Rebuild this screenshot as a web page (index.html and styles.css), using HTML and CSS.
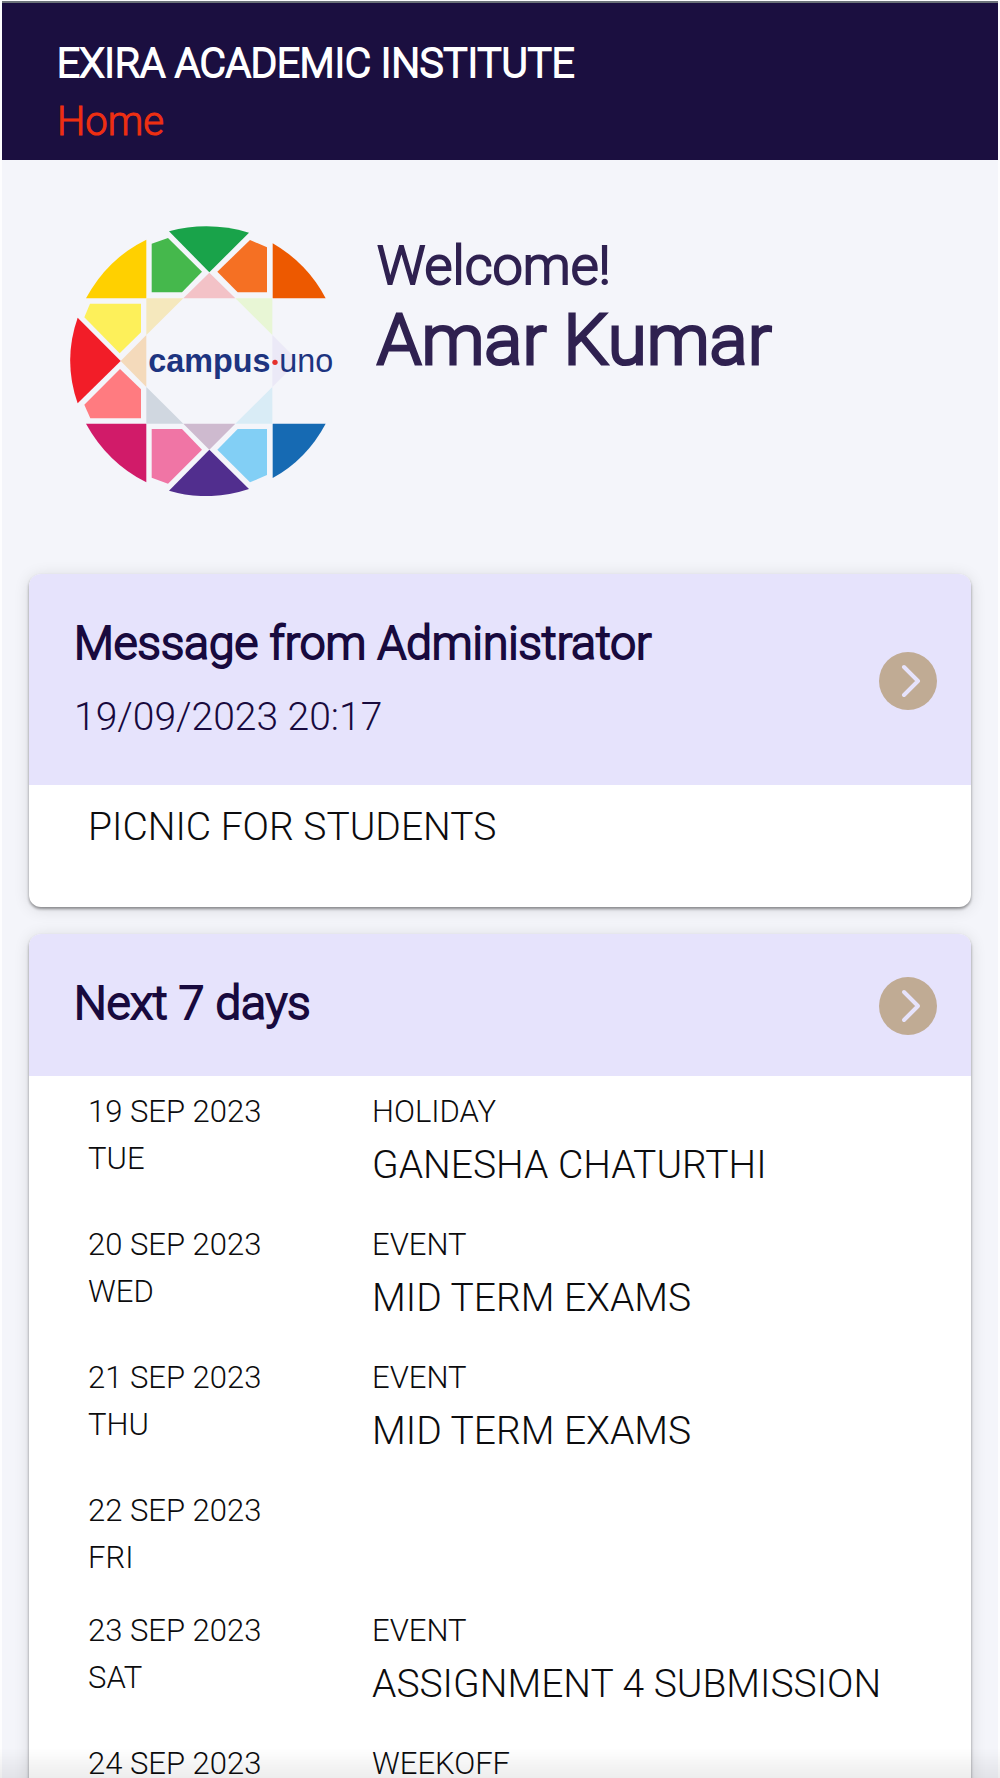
FILE: index.html
```
<!DOCTYPE html>
<html lang="en">
<head>
    <meta charset="UTF-8">
    <meta name="viewport" content="width=device-width, initial-scale=1.0">
    <title>Exira Academic Institute</title>
    <link rel="stylesheet" href="styles.css">
</head>
<body>
    <header class="topbar">
        <h1 class="institute">EXIRA ACADEMIC INSTITUTE</h1>
        <p class="page-name">Home</p>
    </header>
    <main class="content">
        <section class="welcome">
            <svg class="logo" viewBox="60 48 792 810" role="img" aria-label="campus uno">
                <!-- outer ring -->
                <path fill="#19a34a" d="M357 64Q476 32 597 68L478 187Z"/>
                <path fill="#ed5900" d="M668 100Q772 160 827 265H668Z"/>
                <path fill="#ffd000" d="M289 89V265H108Q172 146 289 89Z"/>
                <path fill="#f21d28" d="M83 323L212 453L83 580Q38 451 83 323Z"/>
                <path fill="#d11b69" d="M108 641H289V817Q172 758 108 641Z"/>
                <path fill="#512e8e" d="M478 719L597 837Q476 877 357 842Z"/>
                <path fill="#166ab3" d="M668 641H827Q770 748 668 804Z"/>
                <!-- inner ring -->
                <path fill="#45b84c" d="M305 101L354 84L456 185L396 247H305Z"/>
                <path fill="#f57023" d="M600 90L651 112V247H563L502 185Z"/>
                <path fill="#fdf05a" d="M120 281H273V367L209 430L103 322Z"/>
                <path fill="#ff7b80" d="M210 477L273 538V625H121L103 584Z"/>
                <path fill="#f075a5" d="M305 657H396L456 719L354 821L305 803Z"/>
                <path fill="#82cff5" d="M563 657H651V795L600 817L502 719Z"/>
                <!-- pale star -->
                <path fill="#f3c2c7" d="M478 188L556 265H400Z"/>
                <path fill="#f5e8bd" d="M289 265H400L289 375Z"/>
                <path fill="#e8f6d5" d="M556 265H667V375Z"/>
                <path fill="#f4dabb" d="M289 375V531L212 453Z"/>
                <path fill="#ebe9f7" d="M667 375L744 453L667 531Z"/>
                <path fill="#d0d7e0" d="M289 531L400 641H289Z"/>
                <path fill="#d9ecf6" d="M667 531V641H556Z"/>
                <path fill="#cebacf" d="M400 641H556L478 719Z"/>
                <text class="logo-bold" x="295" y="487">campus</text>
                <circle cx="675" cy="457" r="8" fill="#e5302c"/>
                <text class="logo-thin" x="688" y="487">uno</text>
            </svg>
            <div class="greeting">
                <p class="hello">Welcome!</p>
                <h2 class="user-name">Amar Kumar</h2>
            </div>
        </section>

        <section class="card">
            <div class="card-header">
                <div>
                    <h3 class="card-title">Message from Administrator</h3>
                    <p class="card-date">19/09/2023 20:17</p>
                </div>
                <button class="open-button" type="button" aria-label="Open messages">
                    <svg viewBox="0 0 58 58">
                        <circle cx="29" cy="29" r="29"/>
                        <path d="M25 15L39 29L25 43"/>
                    </svg>
                </button>
            </div>
            <div class="card-body message">
                <p class="detail">PICNIC FOR STUDENTS</p>
            </div>
        </section>

        <section class="card">
            <div class="card-header">
                <h3 class="card-title">Next 7 days</h3>
                <button class="open-button" type="button" aria-label="Open calendar">
                    <svg viewBox="0 0 58 58">
                        <circle cx="29" cy="29" r="29"/>
                        <path d="M25 15L39 29L25 43"/>
                    </svg>
                </button>
            </div>
            <ul class="card-body days">
                <li class="day">
                    <div class="label"><p>19 SEP 2023</p><p>TUE</p></div>
                    <div><p class="label">HOLIDAY</p><p class="detail">GANESHA CHATURTHI</p></div>
                </li>
                <li class="day">
                    <div class="label"><p>20 SEP 2023</p><p>WED</p></div>
                    <div><p class="label">EVENT</p><p class="detail">MID TERM EXAMS</p></div>
                </li>
                <li class="day">
                    <div class="label"><p>21 SEP 2023</p><p>THU</p></div>
                    <div><p class="label">EVENT</p><p class="detail">MID TERM EXAMS</p></div>
                </li>
                <li class="day">
                    <div class="label"><p>22 SEP 2023</p><p>FRI</p></div>
                </li>
                <li class="day">
                    <div class="label"><p>23 SEP 2023</p><p>SAT</p></div>
                    <div><p class="label">EVENT</p><p class="detail">ASSIGNMENT 4 SUBMISSION</p></div>
                </li>
                <li class="day">
                    <div class="label"><p>24 SEP 2023</p></div>
                    <div><p class="label">WEEKOFF</p></div>
                </li>
            </ul>
        </section>
    </main>
    <div class="bottom-fade"></div>
</body>
</html>
```
FILE: styles.css
```
* {
    box-sizing: border-box;
    margin: 0;
    padding: 0;
}
body {
    display: flex;
    flex-direction: column;
    height: 100vh;
    padding: 1px 2px 0;
    background-color: #fdfdfe;
    color: #0c0c0e;
    font-family: Roboto, sans-serif;
    font-weight: 300;
    overflow: hidden;
}
.topbar {
    flex: none;
    padding: 32px 55px 9px;
    border-top: 2px solid #6d747a;
    background-color: #1b0f40;
    font-size: 40px;
    line-height: 58px;
}
/* light face thickened with a stroke */
.institute, .page-name, .hello, .user-name, .card-title {
    font-weight: 300;
    -webkit-text-stroke: 2px currentColor;
}
.institute {
    color: #fff;
    font-size: 40px;
}
.page-name {
    color: #ee2f12;
    -webkit-text-stroke-width: 1px;
}
.content {
    flex: 1;
    overflow-y: auto;
    scrollbar-width: none;
    padding: 0 27px 27px;
    background-color: #f4f5fa;
}
.welcome {
    display: flex;
    gap: 43px;
    padding: 66px 41px 78px;
}
.logo {
    flex: none;
    width: 264px;
    height: 270px;
}
.logo text {
    fill: #1d3480;
    font-family: "Liberation Sans", Arial, sans-serif;
    font-size: 97px;
}
.logo .logo-bold {
    font-weight: 700;
}
.logo .logo-thin {
    font-weight: 400;
}
.greeting {
    padding-top: 7px;
    color: #2f2150;
}
.hello {
    font-size: 54px;
    line-height: 66px;
}
.user-name {
    font-size: 71px;
    line-height: 82px;
    -webkit-text-stroke-width: 3px;
}
.card {
    margin-bottom: 27px;
    border-radius: 12px;
    background-color: #fff;
    box-shadow: 0 2px 3px rgba(0, 0, 0, 0.4), 0 2px 16px rgba(0, 0, 0, 0.12);
}
.card-header {
    display: flex;
    justify-content: space-between;
    align-items: center;
    padding: 41px 34px 45px 45px;
    border-radius: 12px 12px 0 0;
    background-color: #e6e3fc;
    color: #180a3e;
}
.card-title {
    font-size: 46px;
    line-height: 56px;
}
.card-date {
    margin-top: 24px;
    font-size: 39px;
    line-height: 45px;
}
.open-button {
    flex: none;
    width: 58px;
    height: 58px;
    /* centres the icon in the header, whose paddings differ */
    margin: 2px 0 -4px;
    border: none;
    background: none;
    cursor: pointer;
}
.open-button svg {
    display: block;
}
.open-button circle {
    fill: #c0ab94;
}
.open-button path {
    fill: none;
    stroke: #e6e3fc;
    stroke-width: 4;
    stroke-linecap: round;
    stroke-linejoin: round;
}
.card-body {
    padding: 12px 59px 24px;
}
.message {
    padding-bottom: 50px;
}
.days {
    list-style: none;
}
.day {
    display: grid;
    grid-template-columns: 284px 1fr;
    margin-bottom: 26px;
}
.label {
    font-size: 31px;
    line-height: 47px;
}
.detail {
    font-size: 39px;
    line-height: 60px;
}
.bottom-fade {
    position: fixed;
    right: 0;
    bottom: 0;
    left: 0;
    height: 30px;
    background: linear-gradient(transparent, rgba(0, 0, 0, 0.07));
    pointer-events: none;
}
```
